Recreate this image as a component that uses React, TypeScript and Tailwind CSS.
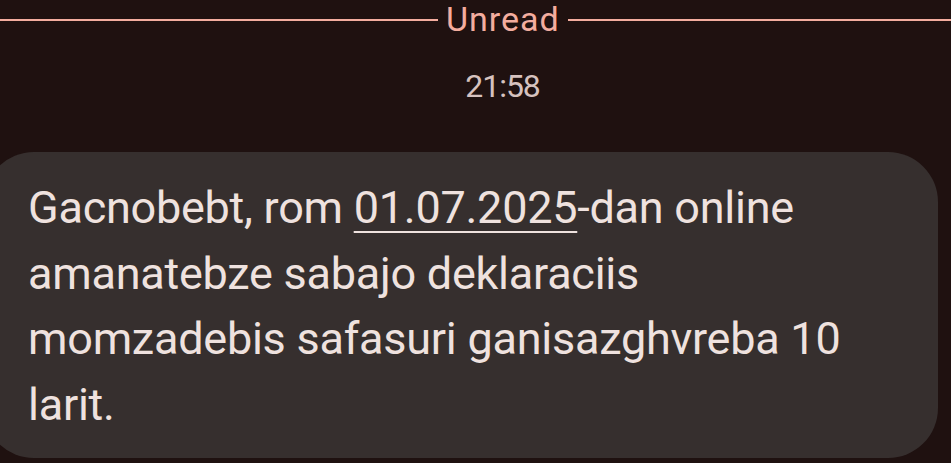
export default function App() {
  return (
    <div className="h-[463px] w-[951px] overflow-hidden bg-[#1f1110] font-['Roboto',sans-serif]">
      <div className="flex h-[40px] items-center gap-[8px]">
        <div className="h-[2px] w-[438px] bg-[#f4ad9f]" />
        <span className="pb-[3px] text-[34px] leading-none tracking-[1px] text-[#f4ad9f]">Unread</span>
        <div className="h-[2px] flex-1 bg-[#f4ad9f]" />
      </div>
      <div className="mt-[30px] pl-[54px] text-center text-[32px] leading-none tracking-[-1px] text-[#d6c2bf]">21:58</div>
      <div className="mt-[50px] ml-[-16px] w-[954px] rounded-[50px] bg-[#362f2e] pl-[44px] pr-[40px] pt-[23px] pb-[21px]">
        <p className="text-[45px] leading-[65.5px] tracking-[-0.25px] text-[#efe2df]">
          Gacnobebt, rom{" "}
          <span className="underline decoration-[2px] underline-offset-[8px]">01.07.2025</span>
          -dan online amanatebze sabajo deklaraciis momzadebis safasuri ganisazghvreba 10 larit.
        </p>
      </div>
    </div>
  );
}
